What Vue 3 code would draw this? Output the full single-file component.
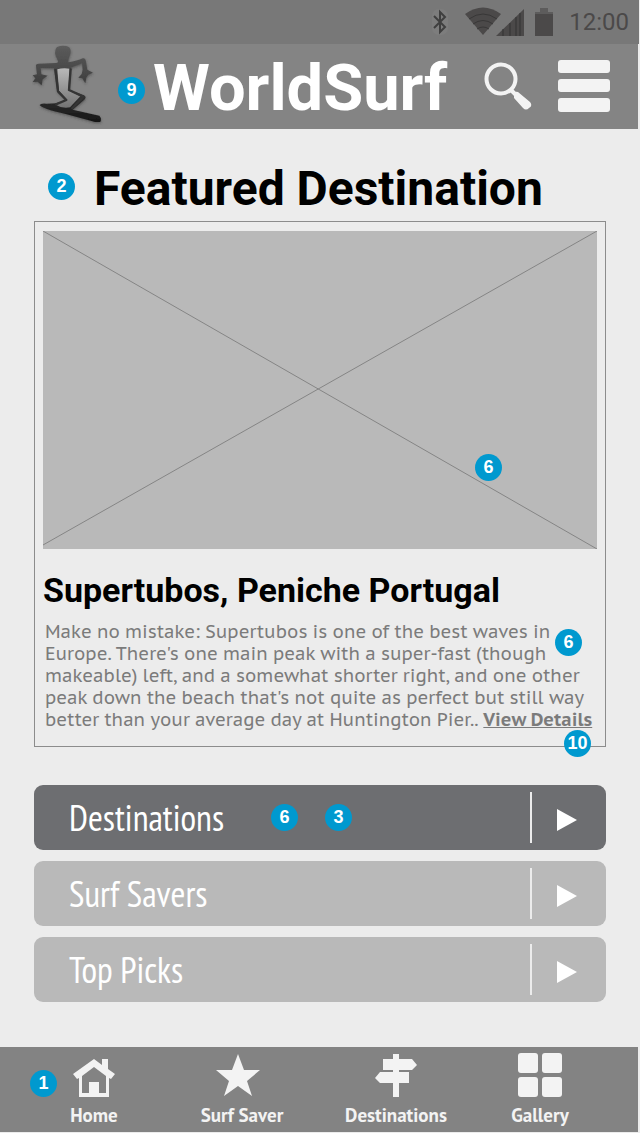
<script setup>
const story = [
  'Make no mistake: Supertubos is one of the best waves in',
  "Europe. There's one main peak with a super-fast (though",
  'makeable) left, and a somewhat shorter right, and one other',
  "peak down the beach that's not quite as perfect but still way",
]
const sections = [
  { label: 'Destinations', active: true, notes: [6, 3] },
  { label: 'Surf Savers', active: false, notes: [] },
  { label: 'Top Picks', active: false, notes: [] },
]
</script>

<template>
  <div class="page">
    <div class="status">
      <svg class="bluetooth" width="20" height="28" viewBox="0 0 20 28" aria-hidden="true">
        <rect x="2" y="1" width="16" height="26" rx="7" fill="#7d7d7d" />
        <path d="M4 8l11 11-5 5V4l5 5L4 20" fill="none" stroke="#3f3f3f" stroke-width="2" />
      </svg>
      <svg class="signal" width="60" height="30" viewBox="0 0 60 30" aria-hidden="true">
        <path d="M0 7Q18-6 36 7L18 28z" fill="#4b4949" />
        <path d="M4 12q14-10 28 0M8 17q10-7 20 0M12 22q6-4 12 0" fill="none" stroke="#383737" stroke-width="1" />
        <path d="M31 29L59 2v27z" fill="#4b4949" />
        <path d="M38 22v7M45 16v13M51 10v19M55 6v23" stroke="#333" stroke-width="1" />
      </svg>
      <svg class="battery" width="18" height="30" viewBox="0 0 18 30" aria-hidden="true">
        <path d="M5 1h8v4h5v6H0V5h5z" fill="#5d5c5c" />
        <path d="M0 7h18v22H0z" fill="#4b4949" />
      </svg>
      <time class="clock">12:00</time>
    </div>

    <header class="header">
      <svg class="logo" width="72" height="82" viewBox="36 12 216 246" role="img" aria-label="Surfer">
        <defs>
          <linearGradient id="ink" x1="0" y1="0" x2="0" y2="1">
            <stop offset="0" stop-color="#5c5c5c" />
            <stop offset="0.55" stop-color="#3a3a3a" />
            <stop offset="1" stop-color="#161616" />
          </linearGradient>
          <linearGradient id="suit" x1="0" y1="0" x2="0" y2="1">
            <stop offset="0" stop-color="#b9b9b9" />
            <stop offset="1" stop-color="#737373" />
          </linearGradient>
          <filter id="shade" x="-10%" y="-10%" width="120%" height="120%">
            <feDropShadow dx="1" dy="4" stdDeviation="3" flood-color="#333" flood-opacity="0.5" />
          </filter>
        </defs>
        <path
          filter="url(#shade)"
          fill="url(#ink)"
          d="M48 76Q46 68 56 68L108 66Q116 65 114 60Q98 30 111 18Q130 11 147 18Q156 28 149 44Q145 53 145 64Q172 60 188 52Q196 50 198 62L202 86L219 95L205 101L199 110L196 127L187 112L175 110L185 99L188 86L186 67Q165 76 153 80L149 148L192 163Q201 168 193 176L158 206L238 224Q246 232 241 243L225 243L140 220Q62 202 59 192Q62 186 80 188L108 187L138 178L112 152L102 82L62 81L64 100L83 104L68 115L65 133L53 122L38 123L46 112L38 103L51 100z"
        />
        <path fill="url(#suit)" d="M112 85Q130 79 149 83L145 147L181 166L150 199Q128 204 107 191L141 177L117 149z" />
        <path fill="none" stroke="#343434" stroke-width="7" stroke-linejoin="round" d="M152 82L147 147L190 167L155 204M106 84L114 151L139 177L106 191" />
      </svg>
      <span class="note">9</span>
      <h1 class="brand">WorldSurf</h1>
      <button class="tool search" type="button" aria-label="Search">
        <svg width="48" height="48" viewBox="0 0 48 48">
          <circle cx="17" cy="17" r="14.5" fill="none" stroke="#f3f3f3" stroke-width="4" />
          <path d="M27 28l5 5" stroke="#f3f3f3" stroke-width="4" />
          <path d="M30 33q0-4 4-3l12 10q3 4-1 6-3 3-6 0L30 36z" fill="#f3f3f3" />
        </svg>
      </button>
      <button class="tool menu" type="button" aria-label="Menu">
        <svg width="52" height="52" viewBox="0 0 52 52" fill="#f3f3f3">
          <rect width="52" height="13" rx="3" />
          <rect y="19" width="52" height="13" rx="3" />
          <rect y="38" width="52" height="14" rx="3" />
        </svg>
      </button>
    </header>

    <main class="main">
      <div class="heading">
        <span class="note">2</span>
        <h2>Featured Destination</h2>
      </div>

      <article class="card">
        <div class="photo">
          <svg viewBox="0 0 554 318" preserveAspectRatio="none" role="img" aria-label="Photo placeholder">
            <path d="M0 0L554 318M0 314L554 0" fill="none" stroke="#858585" stroke-width="1" />
          </svg>
          <span class="note over-photo">6</span>
        </div>
        <h3>Supertubos, Peniche Portugal</h3>
        <div class="story">
          <p>
            <template v-for="line in story" :key="line">{{ line }}<br /></template>
            better than your average day at Huntington Pier.. <a href="#details">View Details</a>
          </p>
          <span class="note over-story">6</span>
        </div>
        <span class="note over-edge">10</span>
      </article>

      <nav class="sections" aria-label="Sections">
        <a v-for="s in sections" :key="s.label" href="#section" class="section" :class="{ active: s.active }">
          <span class="label">{{ s.label }}</span>
          <span class="notes">
            <span v-for="n in s.notes" :key="n" class="note">{{ n }}</span>
          </span>
          <span class="arrow">
            <svg width="20" height="22" viewBox="0 0 20 22" aria-hidden="true"><path d="M0 0l20 11L0 22z" fill="#fff" /></svg>
          </span>
        </a>
      </nav>
    </main>

    <nav class="tabs" aria-label="Main">
      <span class="note over-tabs">1</span>
      <a href="#home" class="tab">
        <svg width="42" height="46" viewBox="0 0 42 46" fill="#f3f3f3">
          <path d="M21 6L0 21l4 5 2-1v19h30V25l2 1 4-5-7-5V6h-6v6zM21 14l12 9v17h-7V29H16v11H9V23z" fill-rule="evenodd" />
        </svg>
        <span>Home</span>
      </a>
      <a href="#saver" class="tab">
        <svg width="52" height="46" viewBox="0 0 52 46" fill="#f3f3f3">
          <path d="M22 1l6 16h16L31 28l5 15-14-10L8 43l5-15L0 17h16z" />
        </svg>
        <span>Surf Saver</span>
      </a>
      <a href="#destinations" class="tab">
        <svg width="42" height="46" viewBox="0 0 42 46" fill="#f3f3f3">
          <path d="M18 1h6v5h13l5 6-5 5H24v2h10v11H24v14h-6V30H5l-5-5 5-6h13v-2H8V6h10z" />
        </svg>
        <span>Destinations</span>
      </a>
      <a href="#gallery" class="tab">
        <svg width="44" height="46" viewBox="0 0 44 46" fill="#f3f3f3">
          <rect width="20" height="20" rx="3" />
          <rect x="24" width="20" height="20" rx="3" />
          <rect y="24" width="20" height="20" rx="3" />
          <rect x="24" y="24" width="20" height="20" rx="3" />
        </svg>
        <span>Gallery</span>
      </a>
    </nav>
  </div>
</template>

<style>
body {
  background: #ececec;
}
</style>

<style scoped>
.page {
  font-family: Roboto, "Liberation Sans", sans-serif;
  color: #000;
}
h1,
h2,
h3,
p {
  margin: 0;
}
svg {
  display: block;
  flex: none;
}
.note {
  display: flex;
  flex: none;
  align-items: center;
  justify-content: center;
  width: 27px;
  height: 27px;
  border-radius: 50%;
  background: #0099cf;
  color: #fff;
  font: bold 18px/27px "Liberation Sans", Arial, sans-serif;
}
.status {
  display: flex;
  align-items: center;
  height: 44px;
  margin-right: 1px;
  padding-right: 10px;
  background: #787878;
}
.bluetooth {
  margin-left: auto;
}
.signal {
  margin-left: 15px;
}
.battery {
  margin: 0 16px 0 10px;
}
.clock {
  color: #4b4949;
  font-size: 24px;
}
.header {
  display: flex;
  align-items: center;
  box-sizing: border-box;
  height: 85px;
  margin-right: 2px;
  padding: 0 28px 0 32px;
  background: #848484;
}
.logo {
  margin: 0 14px 2px 0;
}
.header .note {
  margin: 8px 8px 0 0;
}
.brand {
  flex: 1;
  margin-top: 2px;
  color: #fff;
  font-size: 65px;
  line-height: 74px;
}
.tool {
  flex: none;
  margin-bottom: 2px;
  padding: 0;
  border: 0;
  background: none;
  cursor: pointer;
}
.search {
  margin-right: 26px;
}
.main {
  padding: 32px 34px 45px;
}
.heading {
  display: flex;
  align-items: center;
  gap: 19px;
  height: 56px;
  margin-bottom: 4px;
  padding-left: 14px;
}
.heading .note {
  margin-bottom: 5px;
}
h2 {
  font-size: 48px;
  line-height: 56px;
}
.card {
  position: relative;
  padding: 9px 8px 15px;
  border: 1px solid #8c8c8c;
}
.photo {
  position: relative;
  aspect-ratio: 554 / 318;
  background: #b9b9b9;
}
.photo svg {
  width: 100%;
  height: 100%;
}
.over-photo {
  position: absolute;
  top: 70%;
  left: 78%;
}
h3 {
  margin-top: 21px;
  font-size: 34px;
  line-height: 40px;
}
.story {
  position: relative;
  margin-top: 11px;
  padding-left: 2px;
  color: #7b7b7b;
  font: 18px/22px "PT Sans Caption", "PT Sans", "Noto Sans", sans-serif;
  white-space: nowrap;
}
.story a {
  color: inherit;
  font-weight: bold;
}
.over-story {
  position: absolute;
  top: 8px;
  right: 15px;
}
.over-edge {
  position: absolute;
  right: 14px;
  bottom: -11px;
}
.sections {
  display: grid;
  gap: 11px;
  margin-top: 38px;
}
.section {
  display: flex;
  align-items: center;
  height: 65px;
  padding-left: 35px;
  border-radius: 9px;
  background: #b9b9b9;
  color: #fff;
  text-decoration: none;
}
.active {
  background: #6d6e71;
}
.label {
  width: 202px;
  font: 36px/44px "PT Sans Narrow", "Liberation Sans Narrow", "Roboto Condensed", Roboto, sans-serif;
}
.notes {
  display: flex;
  gap: 27px;
}
.arrow {
  display: flex;
  align-items: center;
  box-sizing: border-box;
  width: 76px;
  height: 51px;
  margin-left: auto;
  padding: 5px 0 0 25px;
  border-left: 2px solid #ececec;
}
.tabs {
  position: relative;
  display: grid;
  grid-template-columns: 148fr 148fr 160fr 128fr;
  height: 85px;
  margin-right: 2px;
  padding: 0 34px 0 20px;
  box-sizing: border-box;
  background: #838383;
}
.tab {
  display: flex;
  flex-direction: column;
  align-items: center;
  gap: 4px;
  padding-top: 6px;
  color: #f3f3f3;
  font: bold 19px/24px "PT Sans", Lato, sans-serif;
  text-decoration: none;
}
.over-tabs {
  position: absolute;
  top: 23px;
  left: 30px;
}
</style>
